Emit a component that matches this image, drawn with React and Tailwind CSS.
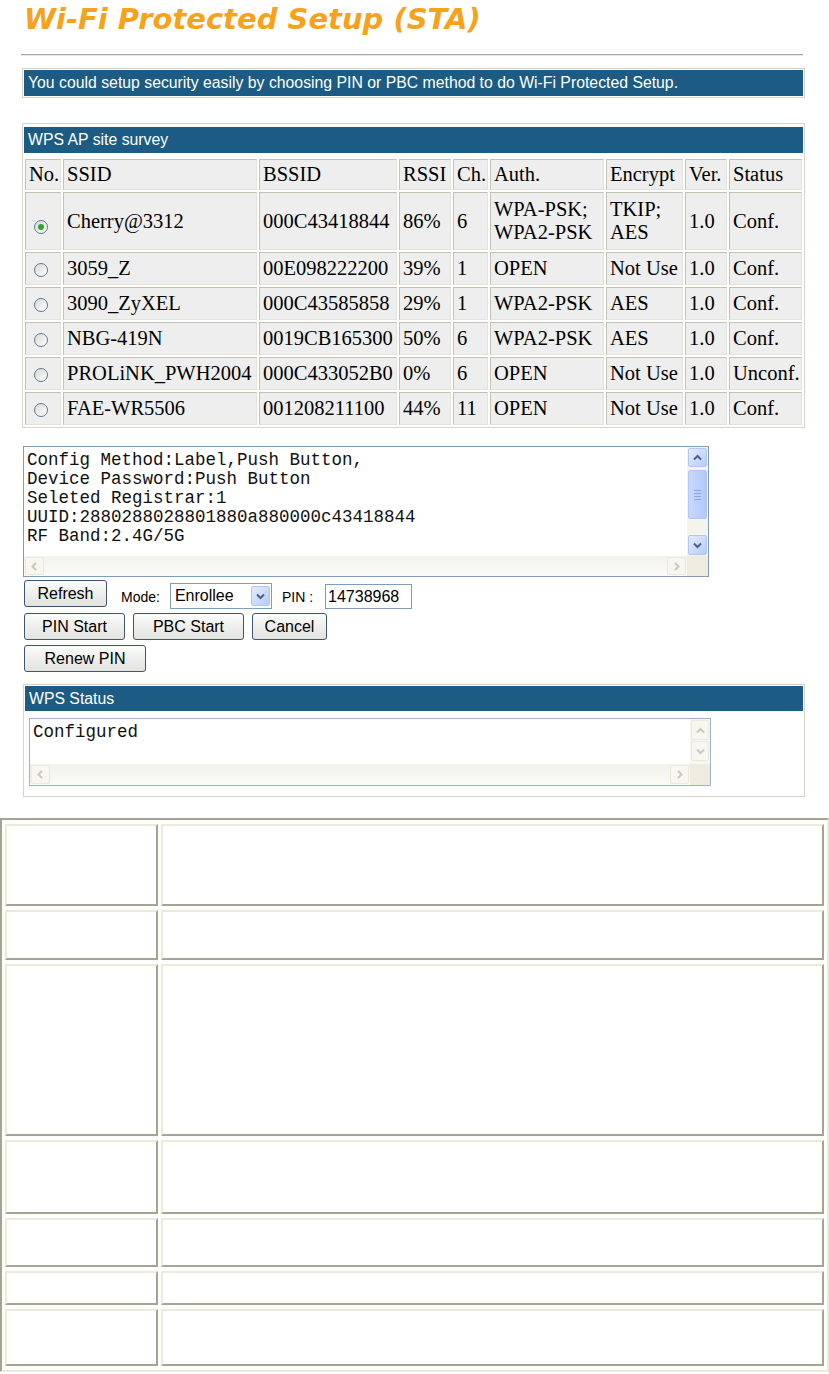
import React from 'react';

const SANS = "font-['Liberation_Sans']";
const SERIF = "font-['Liberation_Serif']";
const MONO = "font-['Liberation_Mono']";

const rows = [
  { sel: true, ssid: 'Cherry@3312', bssid: '000C43418844', rssi: '86%', ch: '6', auth: ['WPA-PSK;', 'WPA2-PSK'], enc: ['TKIP;', 'AES'], ver: '1.0', status: 'Conf.' },
  { ssid: '3059_Z', bssid: '00E098222200', rssi: '39%', ch: '1', auth: ['OPEN'], enc: ['Not Use'], ver: '1.0', status: 'Conf.' },
  { ssid: '3090_ZyXEL', bssid: '000C43585858', rssi: '29%', ch: '1', auth: ['WPA2-PSK'], enc: ['AES'], ver: '1.0', status: 'Conf.' },
  { ssid: 'NBG-419N', bssid: '0019CB165300', rssi: '50%', ch: '6', auth: ['WPA2-PSK'], enc: ['AES'], ver: '1.0', status: 'Conf.' },
  { ssid: 'PROLiNK_PWH2004', bssid: '000C433052B0', rssi: '0%', ch: '6', auth: ['OPEN'], enc: ['Not Use'], ver: '1.0', status: 'Unconf.' },
  { ssid: 'FAE-WR5506', bssid: '001208211100', rssi: '44%', ch: '11', auth: ['OPEN'], enc: ['Not Use'], ver: '1.0', status: 'Conf.' },
];

const Chevron = ({ dir, color }) => {
  const d = {
    up: 'M2 7.5 L5.5 4 L9 7.5',
    down: 'M2 3.5 L5.5 7 L9 3.5',
    left: 'M7 2 L3.5 5.5 L7 9',
    right: 'M4 2 L7.5 5.5 L4 9',
  }[dir];
  return (
    <svg width="11" height="11" viewBox="0 0 11 11">
      <path d={d} fill="none" stroke={color} strokeWidth="2" />
    </svg>
  );
};

const ScrollBtn = ({ dir, off, className = '' }) => (
  <div
    className={`flex items-center justify-center rounded-[2px] border ${
      off ? 'border-[#ebe8dc] bg-[#f7f6f1]' : 'border-[#b3c6f2] bg-linear-to-br from-[#e4ecfe] to-[#b6cbf8]'
    } ${className}`}
  >
    <Chevron dir={dir} color={off ? '#cbc8b8' : '#4d6185'} />
  </div>
);

const Radio = ({ checked }) => (
  <span className="inline-flex w-[14px] h-[14px] rounded-full border border-[#5d7b94] bg-linear-to-br from-[#d8d8d2] to-white items-center justify-center">
    {checked && <span className="w-[6px] h-[6px] rounded-full bg-[#2da52d]" />}
  </span>
);

const Btn = ({ children, className }) => (
  <button
    className={`h-[27px] rounded-[3px] border border-[#3f5372] bg-linear-to-b from-[#fbfbfb] to-[#e2e2de] text-[16px] leading-none text-black ${SANS} ${className}`}
  >
    {children}
  </button>
);

const Td = ({ children, className = '' }) => (
  <td className={`border border-t-[#c3c1b2] border-l-[#c3c1b2] border-b-[#e4e3da] border-r-[#e4e3da] bg-[#eeeeee] px-[3px] align-middle ${className}`}>
    {children}
  </td>
);

const BlueBar = ({ children, className = '' }) => (
  <div className={`bg-[#1c5b83] text-white text-[15.8px] pl-[4px] ${SANS} ${className}`}>{children}</div>
);

function SurveyTable() {
  return (
    <div className="mt-[25px] w-[783px] border border-[#d6d4c6] bg-white">
      <BlueBar className="mx-px mt-[3px] h-[26px] leading-[26px]">WPS AP site survey</BlueBar>
      <table className={`mt-[4px] w-full table-fixed border-separate border-spacing-[2px] text-[20.5px] leading-[23px] text-black ${SERIF}`}>
        <colgroup>
          <col className="w-[36px]" />
          <col className="w-[194px]" />
          <col className="w-[138px]" />
          <col className="w-[52px]" />
          <col className="w-[35px]" />
          <col className="w-[114px]" />
          <col className="w-[77px]" />
          <col className="w-[42px]" />
          <col />
        </colgroup>
        <tbody>
          <tr className="h-[31px]">
            <Td className="px-[1px]">No.</Td>
            <Td>SSID</Td>
            <Td>BSSID</Td>
            <Td className="px-[1px]">RSSI</Td>
            <Td className="px-[1px]">Ch.</Td>
            <Td>Auth.</Td>
            <Td>Encrypt</Td>
            <Td className="px-[1px]">Ver.</Td>
            <Td className="px-[1px]">Status</Td>
          </tr>
          {rows.map((r) => (
            <tr key={r.ssid} className={r.sel ? 'h-[58px]' : 'h-[33px]'}>
              <Td className="text-center">
                <span className="relative top-[2px] right-[2px] inline-flex">
                  <Radio checked={r.sel} />
                </span>
              </Td>
              <Td className="whitespace-nowrap">{r.ssid}</Td>
              <Td className="whitespace-nowrap">{r.bssid}</Td>
              <Td>{r.rssi}</Td>
              <Td>{r.ch}</Td>
              <Td className="whitespace-nowrap">
                {r.auth.map((a) => (
                  <div key={a}>{a}</div>
                ))}
              </Td>
              <Td className="whitespace-nowrap">
                {r.enc.map((a) => (
                  <div key={a}>{a}</div>
                ))}
              </Td>
              <Td>{r.ver}</Td>
              <Td className="px-[1px] whitespace-nowrap">{r.status}</Td>
            </tr>
          ))}
        </tbody>
      </table>
    </div>
  );
}

function InfoBox() {
  return (
    <div className="mt-[18px] ml-px flex h-[131px] w-[686px] flex-col border border-[#7f9db9] bg-white">
      <div className="flex min-h-0 flex-1">
        <div className={`flex-1 overflow-hidden pl-[3px] pt-[4px] text-[17.5px] leading-[19px] text-[#111] whitespace-pre ${MONO}`}>
          {'Config Method:Label,Push Button,\nDevice Password:Push Button\nSeleted Registrar:1\nUUID:2880288028801880a880000c43418844\nRF Band:2.4G/5G'}
        </div>
        <div className="flex w-[21px] flex-col bg-[#f5f4ec] p-px">
          <ScrollBtn dir="up" className="h-[19px]" />
          <div className="mt-[3px] flex h-[49px] items-center justify-center rounded-[2px] border border-[#b3c6f2] bg-linear-to-r from-[#c8d8fd] to-[#b4c9f7]">
            <div className="flex w-[7px] flex-col gap-[2px]">
              <div className="h-px bg-[#8ea6dd]" />
              <div className="h-px bg-[#8ea6dd]" />
              <div className="h-px bg-[#8ea6dd]" />
              <div className="h-px bg-[#8ea6dd]" />
            </div>
          </div>
          <div className="flex-1" />
          <ScrollBtn dir="down" className="h-[20px]" />
        </div>
      </div>
      <div className="flex h-[20px]">
        <div className="flex flex-1 justify-between bg-linear-to-b from-[#f3f2ec] to-[#fbfbf8] p-px">
          <ScrollBtn dir="left" off className="w-[19px]" />
          <ScrollBtn dir="right" off className="w-[19px]" />
        </div>
        <div className="w-[21px] bg-[#eeebe0]" />
      </div>
    </div>
  );
}

function Controls() {
  return (
    <div className={`${SANS} text-black`}>
      <div className="mt-[3px] ml-[2px] flex items-end">
        <Btn className="w-[83px]">Refresh</Btn>
        <span className="ml-[14px] mb-[1px] text-[14px] leading-[18px]">Mode:</span>
        <div className="ml-[10px] mb-[-2px] flex h-[26px] w-[102px] items-center border border-[#7f9db9] bg-white pl-[4px]">
          <span className="flex-1 text-[16px] leading-none">Enrollee</span>
          <ScrollBtn dir="down" className="mr-px h-[20px] w-[19px]" />
        </div>
        <span className="ml-[10px] mb-[1px] text-[14px] leading-[18px]">PIN :</span>
        <div className="ml-[12px] mb-[-2px] flex h-[25px] w-[87px] items-center border border-[#7f9db9] bg-white pl-[2px] text-[16px] leading-none">
          14738968
        </div>
      </div>
      <div className="mt-[6px] ml-[2px] flex gap-[8px]">
        <Btn className="w-[101px]">PIN Start</Btn>
        <Btn className="w-[111px]">PBC Start</Btn>
        <Btn className="w-[75px]">Cancel</Btn>
      </div>
      <div className="mt-[5px] ml-[2px] flex">
        <Btn className="w-[122px]">Renew PIN</Btn>
      </div>
    </div>
  );
}

function StatusBox() {
  return (
    <div className="mt-[12px] ml-px h-[113px] w-[782px] border border-[#d6d4c6] bg-white">
      <BlueBar className="mx-px mt-px h-[25px] leading-[25px]">WPS Status</BlueBar>
      <div className="mt-[7px] ml-[5px] flex h-[68px] w-[682px] flex-col border border-[#9eb2cf] bg-white">
        <div className="flex min-h-0 flex-1">
          <div className={`flex-1 pl-[3px] pt-[4px] text-[17.5px] leading-[19px] text-[#111] ${MONO}`}>Configured</div>
          <div className="flex w-[20px] flex-col bg-[#f7f6f1] p-px">
            <ScrollBtn dir="up" off className="h-[20px]" />
            <ScrollBtn dir="down" off className="mt-px h-[20px]" />
          </div>
        </div>
        <div className="flex h-[21px]">
          <div className="flex flex-1 justify-between bg-linear-to-b from-[#f2f1eb] to-[#fbfbf8] p-px">
            <ScrollBtn dir="left" off className="w-[19px]" />
            <ScrollBtn dir="right" off className="w-[19px]" />
          </div>
          <div className="w-[20px] bg-[#eeebe0]" />
        </div>
      </div>
    </div>
  );
}

const bigRows = [82, 50, 172, 74, 49, 34, 57];

function BigTable() {
  return (
    <table className="mt-[21px] w-[829px] table-fixed border-separate border-spacing-x-[3px] border-spacing-y-[4px] border-2 border-t-[#a6a491] border-l-[#a6a491] border-b-[#ecebd9] border-r-[#ecebd9]">
      <colgroup>
        <col className="w-[153px]" />
        <col />
      </colgroup>
      <tbody>
        {bigRows.map((h, i) => (
          <tr key={i} style={{ height: h }}>
            <td className="border-2 border-t-[#ecebd9] border-l-[#ecebd9] border-b-[#a6a491] border-r-[#a6a491]" />
            <td className="border-2 border-t-[#ecebd9] border-l-[#ecebd9] border-b-[#a6a491] border-r-[#a6a491]" />
          </tr>
        ))}
      </tbody>
    </table>
  );
}

export default function App() {
  return (
    <div className="w-[829px] min-h-[1374px] bg-white">
      <div className="pl-[22px]">
        <h1 className="pt-[2px] pl-[2px] text-[29px] leading-[34px] font-bold italic text-[#f7a21b] font-['DejaVu_Sans']">
          Wi-Fi Protected Setup (STA)
        </h1>
        <div className="mt-[18px] ml-[-1px] w-[782px] border-t border-b border-t-[#a9a9a9] border-b-[#e6e6e6]" />
        <div className="mt-[12px] h-[30px] w-[783px] border border-[#d5d3c5] p-px">
          <BlueBar className="h-full leading-[26px]">
            You could setup security easily by choosing PIN or PBC method to do Wi-Fi Protected Setup.
          </BlueBar>
        </div>
        <SurveyTable />
        <InfoBox />
        <Controls />
        <StatusBox />
      </div>
      <BigTable />
    </div>
  );
}
